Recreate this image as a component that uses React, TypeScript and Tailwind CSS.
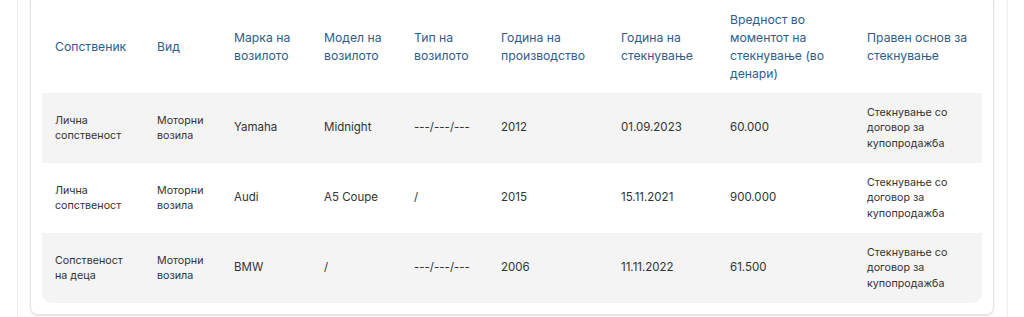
import React from "react";

const headers = [
  "Сопственик",
  "Вид",
  "Марка на возилото",
  "Модел на возилото",
  "Тип на возилото",
  "Година на производство",
  "Година на стекнување",
  "Вредност во моментот на стекнување (во денари)",
  "Правен основ за стекнување",
];

const widths = [102, 77, 90, 90, 87, 120, 109, 137, 128];

const rows = [
  ["Лична сопственост", "Моторни возила", "Yamaha", "Midnight", "---/---/---", "2012", "01.09.2023", "60.000", "Стекнување со договор за купопродажба"],
  ["Лична сопственост", "Моторни возила", "Audi", "A5 Coupe", "/", "2015", "15.11.2021", "900.000", "Стекнување со договор за купопродажба"],
  ["Сопственост на деца", "Моторни возила", "BMW", "/", "---/---/---", "2006", "11.11.2022", "61.500", "Стекнување со договор за купопродажба"],
];

export default function App() {
  return (
    <div className="w-[1024px] h-[317px] bg-white overflow-hidden" style={{ fontFamily: "Inter, 'Noto Sans', sans-serif" }}>
      <div className="ml-[17px] w-[991px] h-[317px] border-x border-[#efefef] pl-[12px] pr-[13px]">
        <div className="border-x border-b border-[#e2e2e2] rounded-b-[8px] shadow-[0_1px_2px_rgba(0,0,0,0.12)] pl-[11px] pr-[10px] pb-[11px]">
          <table className="w-[940px] table-fixed border-collapse">
            <colgroup>
              {widths.map((w, i) => (
                <col key={i} style={{ width: w }} />
              ))}
            </colgroup>
            <thead>
              <tr className="h-[93px]">
                {headers.map((h, i) => (
                  <th key={i} className="text-left align-middle font-normal text-[12.2px] leading-[18px] text-[#2e5d8c] pl-[13px] pr-[8px]">
                    {h}
                  </th>
                ))}
              </tr>
            </thead>
            <tbody>
              {rows.map((r, ri) => (
                <tr key={ri} className={`h-[70px] ${ri % 2 === 0 ? "bg-[#f4f4f4]" : "bg-white"}`}>
                  {r.map((c, ci) => (
                    <td
                      key={ci}
                      className={`align-middle leading-[15.5px] text-[#333333] pl-[13px] pr-[8px] ${
                        ri === 2 && ci === 0 ? "rounded-bl-[10px]" : ""
                      } ${ri === 2 && ci === 8 ? "rounded-br-[10px]" : ""} ${ci >= 2 && ci <= 7 ? "text-[11.5px]" : "text-[10.7px]"}`}
                    >
                      {c}
                    </td>
                  ))}
                </tr>
              ))}
            </tbody>
          </table>
        </div>
      </div>
    </div>
  );
}
